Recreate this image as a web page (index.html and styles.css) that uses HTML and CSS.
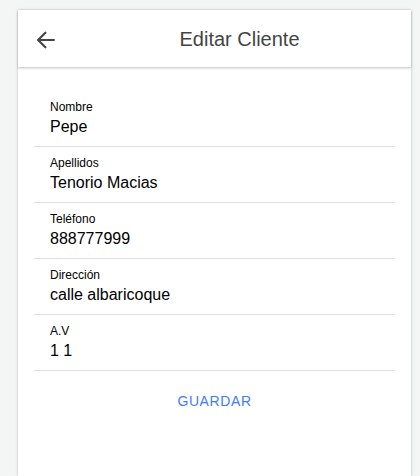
FILE: index.html
```html
<!DOCTYPE html>
<html lang="es">
<head>
<meta charset="utf-8">
<title>Editar Cliente</title>
<link rel="stylesheet" href="styles.css">
</head>
<body>
<div class="card">
  <header class="toolbar">
    <button class="back" aria-label="Volver">
      <svg viewBox="0 0 512 512" width="26" height="26"><path d="M244 400L100 256l144-144M120 256h292" fill="none" stroke="currentColor" stroke-linecap="round" stroke-linejoin="round" stroke-width="42"/></svg>
    </button>
    <h1 class="title">Editar Cliente</h1>
  </header>
  <main class="content">
    <div class="list">
      <div class="item"><span class="label">Nombre</span><span class="value">Pepe</span></div>
      <div class="item"><span class="label">Apellidos</span><span class="value">Tenorio Macias</span></div>
      <div class="item"><span class="label">Teléfono</span><span class="value">888777999</span></div>
      <div class="item"><span class="label">Dirección</span><span class="value">calle albaricoque</span></div>
      <div class="item"><span class="label">A.V</span><span class="value">1 1</span></div>
    </div>
    <div class="actions"><button class="save">GUARDAR</button></div>
  </main>
</div>
</body>
</html>
```
FILE: styles.css
```css
* { box-sizing: border-box; }
html, body { height: 100%; }
body {
  margin: 0;
  background: #f4f5f5;
  font-family: "Liberation Sans", Arial, sans-serif;
  overflow: hidden;
}
.card {
  margin: 10px 9px 0 18px;
  min-height: calc(100vh - 10px);
  background: #fff;
  box-shadow: 0 0 2px rgba(0,0,0,0.22), 0 0 6px rgba(0,0,0,0.05);
}
.toolbar {
  height: 57px;
  display: flex;
  align-items: center;
  position: relative;
  z-index: 1;
  box-shadow: 0 1px 2px rgba(0,0,0,0.18), 0 2px 3px rgba(0,0,0,0.06);
}
.back {
  width: 50px;
  height: 57px;
  padding: 0 0 0 15px;
  border: 0;
  background: none;
  color: #444;
  display: flex;
  align-items: center;
  margin-top: 2px;
}
.back svg { display: block; }
.title {
  flex: 1;
  margin: 0;
  text-align: center;
  font-size: 20px;
  font-weight: 400;
  color: #444;
  line-height: 24px;
}
.content {
  padding: 24px 16px 0;
}
.item {
  display: flex;
  flex-direction: column;
  padding: 8px 16px 9px;
  border-bottom: 1px solid #dedede;
  color: #000;
}
.label {
  font-size: 12px;
  line-height: 16px;
}
.value {
  margin-top: 2px;
  font-size: 16px;
  line-height: 20px;
}
.actions {
  display: flex;
  justify-content: center;
  padding-top: 22px;
}
.save {
  border: 0;
  background: none;
  padding: 0;
  font-family: "Liberation Sans", Arial, sans-serif;
  font-size: 14px;
  line-height: 16px;
  letter-spacing: 0.6px;
  color: #3f7bff;
}
```
